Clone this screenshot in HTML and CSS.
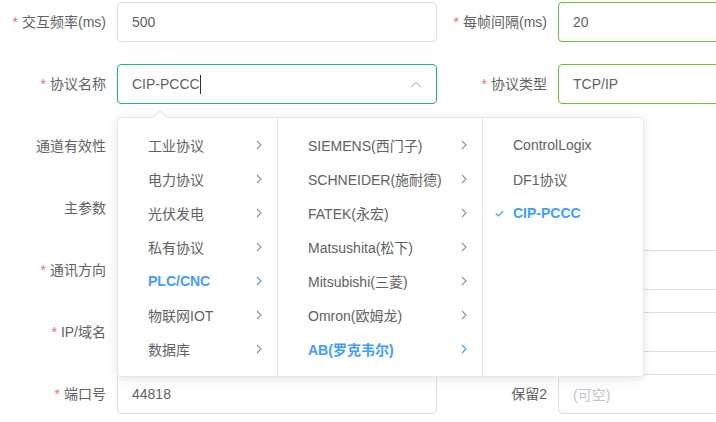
FILE: index.html
```html
<!DOCTYPE html>
<html lang="zh-CN">
<head>
<meta charset="utf-8">
<title>协议配置</title>
<link rel="stylesheet" href="styles.css">
</head>
<body>
<div class="page">
  <div class="form">
    <div class="row">
      <div class="item left"><label class="lbl"><span class="req">*</span>交互频率(ms)</label><div class="ctl"><div class="inp">500</div></div></div>
      <div class="item right"><label class="lbl"><span class="req">*</span>每帧间隔(ms)</label><div class="ctl"><div class="inp ok">20</div></div></div>
    </div>
    <div class="row">
      <div class="item left"><label class="lbl"><span class="req">*</span>协议名称</label><div class="ctl"><div class="inp focus"><span>CIP-PCCC</span><span class="caret"></span><svg class="arrow-up" width="12" height="7" viewBox="0 0 12 7"><polyline points="1,6 6,1.5 11,6" fill="none" stroke="#c0c4cc" stroke-width="1.2"/></svg></div></div></div>
      <div class="item right"><label class="lbl"><span class="req">*</span>协议类型</label><div class="ctl"><div class="inp ok">TCP/IP</div></div></div>
    </div>
    <div class="row">
      <div class="item left"><label class="lbl">通道有效性</label><div class="ctl"></div></div>
      <div class="item right"><label class="lbl"></label><div class="ctl"></div></div>
    </div>
    <div class="row">
      <div class="item left"><label class="lbl">主参数</label><div class="ctl"><div class="inp"></div></div></div>
      <div class="item right"><label class="lbl"></label><div class="ctl"></div></div>
    </div>
    <div class="row">
      <div class="item left"><label class="lbl"><span class="req">*</span>通讯方向</label><div class="ctl"><div class="inp"></div></div></div>
      <div class="item right"><label class="lbl"></label><div class="ctl"><div class="inp"></div></div></div>
    </div>
    <div class="row">
      <div class="item left"><label class="lbl"><span class="req">*</span>IP/域名</label><div class="ctl"><div class="inp"></div></div></div>
      <div class="item right"><label class="lbl"></label><div class="ctl"><div class="inp"></div></div></div>
    </div>
    <div class="row">
      <div class="item left"><label class="lbl"><span class="req">*</span>端口号</label><div class="ctl"><div class="inp">44818</div></div></div>
      <div class="item right"><label class="lbl">保留2</label><div class="ctl"><div class="inp ph">(可空)</div></div></div>
    </div>
  </div>

  <div class="cascader">
    <div class="pop-arrow"></div>
    <ul class="menu m1">
      <li class="opt">工业协议<svg class="chev" width="6" height="10" viewBox="0 0 6 10"><polyline points="1,1 5,5 1,9"/></svg></li>
      <li class="opt">电力协议<svg class="chev" width="6" height="10" viewBox="0 0 6 10"><polyline points="1,1 5,5 1,9"/></svg></li>
      <li class="opt">光伏发电<svg class="chev" width="6" height="10" viewBox="0 0 6 10"><polyline points="1,1 5,5 1,9"/></svg></li>
      <li class="opt">私有协议<svg class="chev" width="6" height="10" viewBox="0 0 6 10"><polyline points="1,1 5,5 1,9"/></svg></li>
      <li class="opt active">PLC/CNC<svg class="chev" width="6" height="10" viewBox="0 0 6 10"><polyline points="1,1 5,5 1,9"/></svg></li>
      <li class="opt">物联网IOT<svg class="chev" width="6" height="10" viewBox="0 0 6 10"><polyline points="1,1 5,5 1,9"/></svg></li>
      <li class="opt">数据库<svg class="chev" width="6" height="10" viewBox="0 0 6 10"><polyline points="1,1 5,5 1,9"/></svg></li>
    </ul>
    <ul class="menu m2">
      <li class="opt">SIEMENS(西门子)<svg class="chev" width="6" height="10" viewBox="0 0 6 10"><polyline points="1,1 5,5 1,9"/></svg></li>
      <li class="opt">SCHNEIDER(施耐德)<svg class="chev" width="6" height="10" viewBox="0 0 6 10"><polyline points="1,1 5,5 1,9"/></svg></li>
      <li class="opt">FATEK(永宏)<svg class="chev" width="6" height="10" viewBox="0 0 6 10"><polyline points="1,1 5,5 1,9"/></svg></li>
      <li class="opt">Matsushita(松下)<svg class="chev" width="6" height="10" viewBox="0 0 6 10"><polyline points="1,1 5,5 1,9"/></svg></li>
      <li class="opt">Mitsubishi(三菱)<svg class="chev" width="6" height="10" viewBox="0 0 6 10"><polyline points="1,1 5,5 1,9"/></svg></li>
      <li class="opt">Omron(欧姆龙)<svg class="chev" width="6" height="10" viewBox="0 0 6 10"><polyline points="1,1 5,5 1,9"/></svg></li>
      <li class="opt active">AB(罗克韦尔)<svg class="chev" width="6" height="10" viewBox="0 0 6 10"><polyline points="1,1 5,5 1,9"/></svg></li>
    </ul>
    <ul class="menu m3">
      <li class="opt">ControlLogix</li>
      <li class="opt">DF1协议</li>
      <li class="opt active"><svg class="check" width="9" height="7" viewBox="0 0 9 7"><polyline points="0.8,3.5 3.3,6 8.2,1"/></svg>CIP-PCCC</li>
    </ul>
  </div>
</div>
</body>
</html>
```

FILE: styles.css
```css
html, body {
  margin: 0;
  padding: 0;
  background: #fff;
}
body {
  width: 716px;
  height: 422px;
  overflow: hidden;
  font-family: "Liberation Sans", Arial, "Noto Sans CJK SC", sans-serif;
  font-size: 14px;
  color: #606266;
}
.page {
  position: relative;
  width: 716px;
  height: 422px;
  overflow: hidden;
}
.form {
  padding-top: 2px;
  display: flex;
  flex-direction: column;
  gap: 22px;
}
.row {
  display: flex;
  height: 40px;
}
.item {
  display: flex;
  align-items: center;
  flex: none;
}
.item.left .lbl { width: 117px; }
.item.right .lbl { width: 121px; }
.lbl {
  box-sizing: border-box;
  padding-right: 11px;
  text-align: right;
  line-height: 40px;
  white-space: nowrap;
  color: #606266;
}
.req {
  color: #f56c6c;
  margin-right: 4px;
}
.ctl {
  width: 320px;
  height: 40px;
}
.inp {
  box-sizing: border-box;
  width: 320px;
  height: 40px;
  border: 1px solid #dcdfe6;
  border-radius: 4px;
  padding: 0 14px;
  display: flex;
  align-items: center;
  color: #606266;
  background: #fff;
}
.inp.ok { border-color: #67c23a; }
.inp.focus { border-color: #1ab394; }
.inp.ph { color: #c0c4cc; }
.caret {
  display: inline-block;
  width: 1px;
  height: 19px;
  background: #303133;
}
.arrow-up {
  margin-left: auto;
}

.cascader {
  position: absolute;
  left: 117px;
  top: 117px;
  height: 260px;
  display: flex;
  background: #fff;
  border: 1px solid #e4e7ed;
  border-radius: 4px;
  box-shadow: 0 2px 12px 0 rgba(0, 0, 0, 0.1);
  box-sizing: border-box;
}
.pop-arrow {
  position: absolute;
  top: -6px;
  left: 37px;
  width: 9px;
  height: 9px;
  background: #fff;
  border-top: 1px solid #e4e7ed;
  border-left: 1px solid #e4e7ed;
  transform: rotate(45deg);
}
.menu {
  list-style: none;
  margin: 0;
  padding: 10px 0 10px;
  box-sizing: border-box;
  border-right: 1px solid #e4e7ed;
}
.menu.m1 { width: 160px; }
.menu.m2 { width: 205px; }
.menu.m3 { width: 160px; border-right: 0; }
.opt {
  height: 34px;
  display: flex;
  align-items: center;
  padding: 0 15px 0 30px;
  white-space: nowrap;
  color: #606266;
}
.opt.active {
  color: #409eff;
  font-weight: bold;
}
.chev {
  margin-left: auto;
  fill: none;
  stroke: #909399;
  stroke-width: 1.1;
}
.opt.active .chev { stroke: #409eff; }
.check {
  margin-left: -18px;
  margin-right: 9px;
  fill: none;
  stroke: #409eff;
  stroke-width: 1.1;
}
```
